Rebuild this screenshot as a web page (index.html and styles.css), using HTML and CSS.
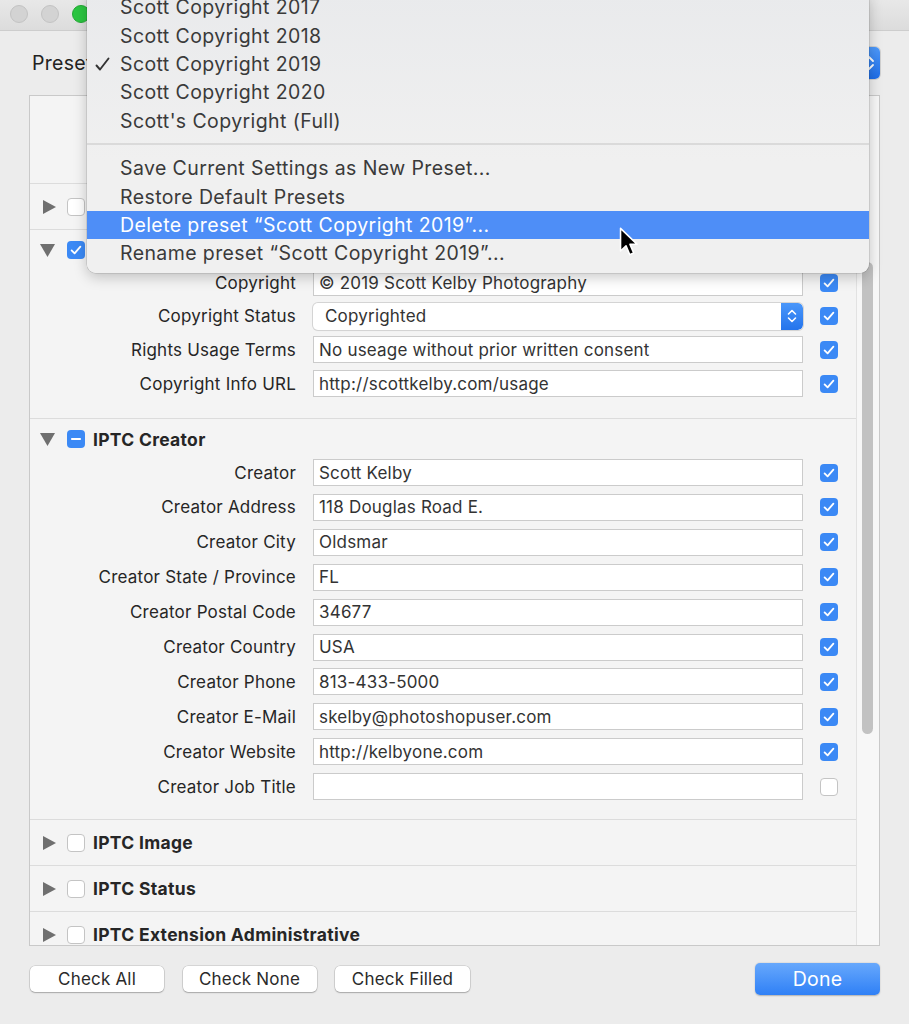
FILE: index.html
```html
<!DOCTYPE html>
<html>
<head>
<meta charset="utf-8">
<link rel="stylesheet" href="styles.css">
</head>
<body>
<div class="window">
  <div class="titlebar">
    <span class="light grey"></span>
    <span class="light grey"></span>
    <span class="light green"></span>
  </div>
  <div class="content">
    <div class="preset-row">
      <span class="preset-label">Preset:</span>
      <div class="popup">
        <span class="popup-value"></span>
        <span class="popup-arrows"><svg width="12" height="18" viewBox="0 0 12 18"><path d="M2 7 L6 3 L10 7 M2 11 L6 15 L10 11" fill="none" stroke="#fff" stroke-width="1.8" stroke-linecap="round" stroke-linejoin="round"/></svg></span>
      </div>
    </div>

    <div class="panel">
      <div class="panel-body">
        <div class="top-block"></div>

        <div class="sec-head collapsed">
          <svg class="tri" width="16" height="16" viewBox="0 0 16 16"><polygon points="3,1 16,8 3,15"/></svg>
          <span class="cb"></span>
        </div>

        <div class="section">
          <div class="sec-head open copyright-head">
            <svg class="tri" width="16" height="16" viewBox="0 0 16 16"><polygon points="0,2 15,2 7.5,15"/></svg>
            <span class="cb on"><svg width="18" height="18" viewBox="0 0 18 18"><path d="M4.6 9.4 L7.6 12.4 L13.4 5.6" fill="none" stroke="#fff" stroke-width="1.8" stroke-linecap="round" stroke-linejoin="round"/></svg></span>
          </div>
          <div class="fields copyright">
            <span class="lbl">Copyright</span><span class="field">© 2019 Scott Kelby Photography</span><span class="cb on"><svg width="18" height="18" viewBox="0 0 18 18"><path d="M4.6 9.4 L7.6 12.4 L13.4 5.6" fill="none" stroke="#fff" stroke-width="1.8" stroke-linecap="round" stroke-linejoin="round"/></svg></span>
            <span class="lbl">Copyright Status</span><span class="field select"><span class="sel-text">Copyrighted</span><span class="stepper"><svg width="12" height="18" viewBox="0 0 12 18"><path d="M2.5 7 L6 3.5 L9.5 7 M2.5 11 L6 14.5 L9.5 11" fill="none" stroke="#fff" stroke-width="1.6" stroke-linecap="round" stroke-linejoin="round"/></svg></span></span><span class="cb on"><svg width="18" height="18" viewBox="0 0 18 18"><path d="M4.6 9.4 L7.6 12.4 L13.4 5.6" fill="none" stroke="#fff" stroke-width="1.8" stroke-linecap="round" stroke-linejoin="round"/></svg></span>
            <span class="lbl">Rights Usage Terms</span><span class="field">No useage without prior written consent</span><span class="cb on"><svg width="18" height="18" viewBox="0 0 18 18"><path d="M4.6 9.4 L7.6 12.4 L13.4 5.6" fill="none" stroke="#fff" stroke-width="1.8" stroke-linecap="round" stroke-linejoin="round"/></svg></span>
            <span class="lbl">Copyright Info URL</span><span class="field">http://scottkelby.com/usage</span><span class="cb on"><svg width="18" height="18" viewBox="0 0 18 18"><path d="M4.6 9.4 L7.6 12.4 L13.4 5.6" fill="none" stroke="#fff" stroke-width="1.8" stroke-linecap="round" stroke-linejoin="round"/></svg></span>
          </div>
        </div>

        <div class="section">
          <div class="sec-head open creator-head">
            <svg class="tri" width="16" height="16" viewBox="0 0 16 16"><polygon points="0,2 15,2 7.5,15"/></svg>
            <span class="cb on"><svg width="18" height="18" viewBox="0 0 18 18"><path d="M5 9 H13" fill="none" stroke="#fff" stroke-width="2.2" stroke-linecap="round"/></svg></span>
            <span class="sec-title">IPTC Creator</span>
          </div>
          <div class="fields creator">
            <span class="lbl">Creator</span><span class="field">Scott Kelby</span><span class="cb on"><svg width="18" height="18" viewBox="0 0 18 18"><path d="M4.6 9.4 L7.6 12.4 L13.4 5.6" fill="none" stroke="#fff" stroke-width="1.8" stroke-linecap="round" stroke-linejoin="round"/></svg></span>
            <span class="lbl">Creator Address</span><span class="field">118 Douglas Road E.</span><span class="cb on"><svg width="18" height="18" viewBox="0 0 18 18"><path d="M4.6 9.4 L7.6 12.4 L13.4 5.6" fill="none" stroke="#fff" stroke-width="1.8" stroke-linecap="round" stroke-linejoin="round"/></svg></span>
            <span class="lbl">Creator City</span><span class="field">Oldsmar</span><span class="cb on"><svg width="18" height="18" viewBox="0 0 18 18"><path d="M4.6 9.4 L7.6 12.4 L13.4 5.6" fill="none" stroke="#fff" stroke-width="1.8" stroke-linecap="round" stroke-linejoin="round"/></svg></span>
            <span class="lbl">Creator State / Province</span><span class="field">FL</span><span class="cb on"><svg width="18" height="18" viewBox="0 0 18 18"><path d="M4.6 9.4 L7.6 12.4 L13.4 5.6" fill="none" stroke="#fff" stroke-width="1.8" stroke-linecap="round" stroke-linejoin="round"/></svg></span>
            <span class="lbl">Creator Postal Code</span><span class="field">34677</span><span class="cb on"><svg width="18" height="18" viewBox="0 0 18 18"><path d="M4.6 9.4 L7.6 12.4 L13.4 5.6" fill="none" stroke="#fff" stroke-width="1.8" stroke-linecap="round" stroke-linejoin="round"/></svg></span>
            <span class="lbl">Creator Country</span><span class="field">USA</span><span class="cb on"><svg width="18" height="18" viewBox="0 0 18 18"><path d="M4.6 9.4 L7.6 12.4 L13.4 5.6" fill="none" stroke="#fff" stroke-width="1.8" stroke-linecap="round" stroke-linejoin="round"/></svg></span>
            <span class="lbl">Creator Phone</span><span class="field">813-433-5000</span><span class="cb on"><svg width="18" height="18" viewBox="0 0 18 18"><path d="M4.6 9.4 L7.6 12.4 L13.4 5.6" fill="none" stroke="#fff" stroke-width="1.8" stroke-linecap="round" stroke-linejoin="round"/></svg></span>
            <span class="lbl">Creator E-Mail</span><span class="field">skelby@photoshopuser.com</span><span class="cb on"><svg width="18" height="18" viewBox="0 0 18 18"><path d="M4.6 9.4 L7.6 12.4 L13.4 5.6" fill="none" stroke="#fff" stroke-width="1.8" stroke-linecap="round" stroke-linejoin="round"/></svg></span>
            <span class="lbl">Creator Website</span><span class="field">http://kelbyone.com</span><span class="cb on"><svg width="18" height="18" viewBox="0 0 18 18"><path d="M4.6 9.4 L7.6 12.4 L13.4 5.6" fill="none" stroke="#fff" stroke-width="1.8" stroke-linecap="round" stroke-linejoin="round"/></svg></span>
            <span class="lbl">Creator Job Title</span><span class="field"></span><span class="cb"></span>
          </div>
        </div>

        <div class="sec-head collapsed">
          <svg class="tri" width="16" height="16" viewBox="0 0 16 16"><polygon points="3,1 16,8 3,15"/></svg>
          <span class="cb"></span>
          <span class="sec-title">IPTC Image</span>
        </div>
        <div class="sec-head collapsed">
          <svg class="tri" width="16" height="16" viewBox="0 0 16 16"><polygon points="3,1 16,8 3,15"/></svg>
          <span class="cb"></span>
          <span class="sec-title">IPTC Status</span>
        </div>
        <div class="sec-head collapsed">
          <svg class="tri" width="16" height="16" viewBox="0 0 16 16"><polygon points="3,1 16,8 3,15"/></svg>
          <span class="cb"></span>
          <span class="sec-title">IPTC Extension Administrative</span>
        </div>
      </div>
      <div class="scrollbar"><div class="thumb"></div></div>
    </div>

    <div class="buttons">
      <button class="btn">Check All</button>
      <button class="btn">Check None</button>
      <button class="btn wide">Check Filled</button>
      <span class="spacer"></span>
      <button class="btn done">Done</button>
    </div>
  </div>

  <div class="menu">
    <div class="mi">Scott Copyright 2017</div>
    <div class="mi">Scott Copyright 2018</div>
    <div class="mi checked"><svg class="check" width="16" height="16" viewBox="0 0 16 16"><path d="M1.5 8.5 L5 12.5 L13.5 1.5" fill="none" stroke="#333" stroke-width="1.9" stroke-linecap="round" stroke-linejoin="round"/></svg>Scott Copyright 2019</div>
    <div class="mi">Scott Copyright 2020</div>
    <div class="mi">Scott's Copyright (Full)</div>
    <div class="msep"></div>
    <div class="mi">Save Current Settings as New Preset...</div>
    <div class="mi">Restore Default Presets</div>
    <div class="mi hl">Delete preset “Scott Copyright 2019”...</div>
    <div class="mi">Rename preset “Scott Copyright 2019”...</div>
  </div>

  <svg class="cursor" width="20" height="31" viewBox="0 0 14 22"><path d="M1 1 L1 17 L4.9 13.3 L7.5 19.6 L10.3 18.4 L7.7 12.3 L12.8 12.3 Z" fill="#000" stroke="#fff" stroke-width="1.1" stroke-linejoin="round"/></svg>
</div>
</body>
</html>
```

FILE: styles.css
```css
* { box-sizing: border-box; }
html, body { margin: 0; padding: 0; }
body {
  width: 909px;
  height: 1024px;
  overflow: hidden;
  background: #ececec;
  font-family: Inter, "Noto Sans", "Liberation Sans", sans-serif;
  color: #262626;
}
.window {
  position: relative;
  width: 909px;
  height: 1024px;
  background: #ececec;
}
.titlebar {
  height: 31px;
  background: linear-gradient(#e8e8e8, #dcdcdc);
  border-bottom: 1px solid #cdcdcd;
  display: flex;
  align-items: center;
  padding-left: 10px;
  gap: 13px;
}
.light {
  width: 18px;
  height: 18px;
  border-radius: 50%;
  margin-top: -2px;
}
.light.grey { background: #d3d3d3; border: 1px solid #c3c3c3; }
.light.green { background: #2bc641; border: 1px solid #22a934; }

.content {
  padding: 0 29px 0 29px;
}
.preset-row {
  margin-top: 16px;
  height: 32px;
  display: flex;
  align-items: center;
}
.preset-label {
  font-size: 19.5px;
  letter-spacing: 0.3px;
  color: #222;
  margin-left: 3px;
  width: 72px;
}
.popup {
  flex: 1;
  height: 32px;
  background: #fff;
  border-radius: 5px;
  box-shadow: 0 0 0 1px #d0d0d0;
  display: flex;
  align-items: center;
  justify-content: space-between;
  padding-left: 12px;
}
.popup-arrows {
  width: 22px;
  height: 32px;
  border-radius: 0 5px 5px 0;
  background: linear-gradient(#4d99fa, #1f6ee8);
  display: flex;
  align-items: center;
  justify-content: center;
}

.panel {
  margin-top: 16px;
  height: 851px;
  border: 1px solid #c9c9c9;
  background: #f4f4f4;
  display: flex;
  overflow: hidden;
}
.panel-body {
  flex: 1;
  overflow: hidden;
}
.top-block {
  height: 88px;
  border-bottom: 1px solid #dcdcdc;
}
.sec-head {
  display: flex;
  align-items: center;
  padding-left: 10px;
}
.sec-head.collapsed {
  height: 46px;
  border-bottom: 1px solid #dcdcdc;
}
.copyright-head { height: 39px; }
.creator-head { height: 40px; }
.tri { fill: #6f6f6f; flex: none; }
.sec-head .cb { margin-left: 11px; }
.sec-title {
  margin-left: 8px;
  font-size: 17.5px;
  font-weight: 700;
  letter-spacing: 0.3px;
  color: #262626;
}
.section {
  border-bottom: 1px solid #dcdcdc;
}
.fields {
  display: grid;
  grid-template-columns: 266px 490px 19px;
  column-gap: 17px;
  align-items: center;
}
.fields.copyright { row-gap: 6.7px; padding-bottom: 21px; }
.fields.creator { row-gap: 7.9px; padding-bottom: 19px; }
.lbl {
  text-align: right;
  font-size: 17px;
  letter-spacing: 0.22px;
  color: #262626;
  white-space: nowrap;
}
.field {
  height: 27px;
  background: #fff;
  border: 1px solid #cbcbcb;
  font-size: 17px;
  letter-spacing: 0.2px;
  color: #333;
  padding-left: 5px;
  display: flex;
  align-items: center;
  white-space: nowrap;
  overflow: hidden;
}
.field.select {
  border: none;
  border-radius: 5px;
  box-shadow: 0 0 0 1px #d4d4d4, 0 1px 1px rgba(0,0,0,0.08);
  padding-left: 12px;
  justify-content: space-between;
}
.stepper {
  width: 22px;
  height: 27px;
  border-radius: 0 5px 5px 0;
  background: linear-gradient(#4a97fa, #2474ec);
  display: flex;
  align-items: center;
  justify-content: center;
}
.cb {
  width: 18px;
  height: 18px;
  border-radius: 4px;
  background: #fff;
  border: 1px solid #c4c4c4;
  display: flex;
  flex: none;
}
.cb.on {
  background: #3b89f5;
  border: none;
}
.scrollbar {
  width: 23px;
  border-left: 1px solid #e2e2e2;
  background: #f7f7f7;
  position: relative;
}
.thumb {
  position: absolute;
  left: 5px;
  top: 166px;
  width: 11px;
  height: 472px;
  border-radius: 6px;
  background: #c2c2c2;
}

.buttons {
  margin-top: 17px;
  height: 32px;
  display: flex;
  align-items: center;
  padding-left: 1px;
}
.btn {
  font-family: Inter, "Noto Sans", "Liberation Sans", sans-serif;
  height: 26px;
  width: 134px;
  margin-right: 18.5px;
  background: #fff;
  border: none;
  border-radius: 5px;
  box-shadow: 0 0 0 0.5px rgba(0,0,0,0.18), 0 1px 1.5px rgba(0,0,0,0.22);
  font-size: 17px;
  letter-spacing: 0.2px;
  color: #2a2a2a;
  padding: 0;
}
.btn.wide { width: 135px; }
.spacer { flex: 1; }
.btn.done {
  width: 125px;
  height: 32px;
  margin-right: 0;
  background: linear-gradient(#67a8fc, #2f80f6);
  color: #fff;
  font-size: 19.5px;
  box-shadow: 0 0.5px 1.5px rgba(0,0,0,0.25);
}

.menu {
  position: absolute;
  left: 87px;
  top: -7px;
  width: 782px;
  height: 280px;
  background: linear-gradient(#e9eaec, #f0f0f0 60%);
  border-radius: 0 0 9px 9px;
  box-shadow: 0 4px 14px rgba(0,0,0,0.22), 0 0 0 0.5px rgba(0,0,0,0.18);
  font-size: 19.5px;
  letter-spacing: 0.4px;
  color: #3a3a3a;
}
.mi {
  height: 28.4px;
  display: flex;
  align-items: center;
  padding-left: 33px;
  position: relative;
  white-space: nowrap;
}
.mi.hl {
  background: #4e8ef7;
  color: #fff;
}
.check {
  position: absolute;
  left: 8px;
  top: 7px;
}
.msep {
  height: 19px;
  display: flex;
  align-items: center;
}
.msep::before {
  content: "";
  flex: 1;
  height: 2px;
  background: #dadada;
}
.cursor {
  position: absolute;
  left: 619px;
  top: 227px;
}
```
